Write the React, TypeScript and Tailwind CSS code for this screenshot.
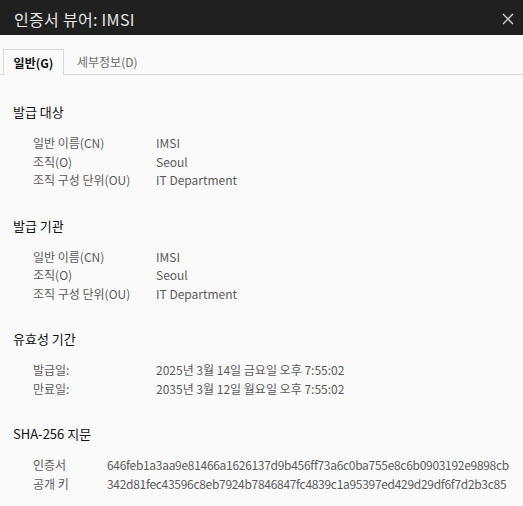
const font = { fontFamily: '"Noto Sans CJK KR", "Noto Sans", sans-serif' };

type Row = [string, string];

function Section({
  title,
  rows,
  labelCol = "w-[123px]",
  valueCls = "",
}: {
  title: string;
  rows: Row[];
  labelCol?: string;
  valueCls?: string;
}) {
  return (
    <div className="pl-[13px]">
      <div className="text-[13px] leading-[18px] text-[#111]">{title}</div>
      <div className="mt-[13px] pl-[20px] text-[12px] leading-[18.5px] text-[#5a5a5a]">
        {rows.map(([k, v]) => (
          <div key={k} className="flex whitespace-nowrap">
            <div className={`${labelCol} shrink-0`}>{k}</div>
            <div className={valueCls}>{v}</div>
          </div>
        ))}
      </div>
    </div>
  );
}

export default function App() {
  const subject: Row[] = [
    ["일반 이름(CN)", "IMSI"],
    ["조직(O)", "Seoul"],
    ["조직 구성 단위(OU)", "IT Department"],
  ];
  return (
    <div className="w-[523px] h-[506px] overflow-hidden bg-[#fafafa] flex flex-col" style={font}>
      {/* title bar */}
      <div className="h-[35px] bg-[#202020] flex items-center justify-between pl-[14px] pr-[9px] shrink-0">
        <div className="text-[16px] text-[#e6e6e6] leading-none pt-[2px] tracking-[0.3px]">인증서 뷰어: IMSI</div>
        <svg width="12" height="12" viewBox="0 0 12 12" className="mt-[2px]">
          <path d="M1 1 L11 11 M11 1 L1 11" stroke="#cfcfcf" strokeWidth="1.4" />
        </svg>
      </div>

      {/* tabs */}
      <div className="mt-[14px] h-[26px] flex items-end border-b border-[#d9d9d9] pl-[3px] shrink-0">
        <div className="h-[26px] w-[61px] border border-b-0 border-[#d9d9d9] bg-[#fafafa] -mb-px flex items-center justify-center text-[12px] font-bold text-[#111]">
          일반(G)
        </div>
        <div className="h-[25px] px-[13px] flex items-center text-[12px] text-[#6a6a6a]">세부정보(D)</div>
      </div>

      <div className="pt-[28px] flex flex-col gap-[27px]">
        <Section title="발급 대상" rows={subject} />
        <Section title="발급 기관" rows={subject} />
        <Section
          title="유효성 기간"
          rows={[
            ["발급일:", "2025년 3월 14일 금요일 오후 7:55:02"],
            ["만료일:", "2035년 3월 12일 월요일 오후 7:55:02"],
          ]}
        />
        <Section
          title="SHA-256 지문"
          labelCol="w-[74px]"
          valueCls="tracking-[-0.3px]"
          rows={[
            ["인증서", "646feb1a3aa9e81466a1626137d9b456ff73a6c0ba755e8c6b0903192e9898cb"],
            ["공개 키", "342d81fec43596c8eb7924b7846847fc4839c1a95397ed429d29df6f7d2b3c85"],
          ]}
        />
      </div>
    </div>
  );
}
